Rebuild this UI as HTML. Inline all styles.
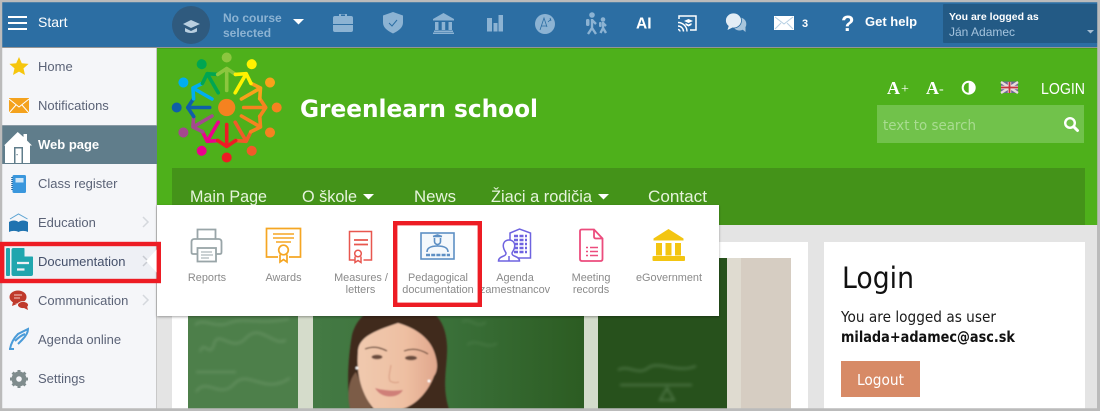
<!DOCTYPE html>
<html><head><meta charset="utf-8"><style>
html,body{margin:0;padding:0;background:#bbb;width:1100px;height:411px;overflow:hidden}
svg{display:block}
text{font-family:"Liberation Sans",sans-serif}
.d{font-family:"DejaVu Sans",sans-serif}
.m{font-size:13px;fill:#5b6377}
.t{font-size:10.9px;fill:#8a8a8a;text-anchor:middle}
.tb{fill:#8cb3d3}
.nav{font-size:16.5px;fill:#e6f4dc}
</style></head><body>
<svg width="1100" height="411" viewBox="0 0 1100 411" xmlns="http://www.w3.org/2000/svg">
<defs>
<filter id="b1"><feGaussianBlur stdDeviation=".8"/></filter>
<filter id="b2"><feGaussianBlur stdDeviation="1.600"/></filter>
<filter id="sh" x="-5%" y="-10%" width="110%" height="125%"><feDropShadow dx="0" dy="1" stdDeviation="1.2" flood-color="#000" flood-opacity=".35"/></filter>
<linearGradient id="bd" x1="0" x2="1" y1="0" y2="0"><stop offset="0" stop-color="#447a44"/><stop offset=".5" stop-color="#3a7039"/><stop offset="1" stop-color="#2c5c22"/></linearGradient>
<linearGradient id="skin" x1="0" x2="1" y1="0" y2="0"><stop offset="0" stop-color="#f0c9ae"/><stop offset=".6" stop-color="#eebfa2"/><stop offset="1" stop-color="#e0a68c"/></linearGradient>
<g id="fig"><path d="M0-17V-39M-9-33L0-39L9-33" fill="none" stroke-width="3.600" stroke-linecap="round" stroke-linejoin="round"/><circle cy="-50" r="5" stroke="none"/></g>
</defs>
<rect width="1100" height="411" fill="#bbb"/>
<!-- background -->
<rect x="157" y="48" width="940" height="361" fill="#e4e4e4"/>
<rect x="157" y="48" width="941" height="177" fill="#4eb01b"/>
<rect x="172" y="168" width="913" height="57" fill="#449319"/>
<rect x="172" y="242" width="636" height="167" fill="#fff"/>
<rect x="824" y="242" width="261" height="167" fill="#fff"/>
<!-- photo -->
<svg x="188" y="258" width="603" height="151" viewBox="188 258 603 151">
<rect x="188" y="258" width="603" height="151" fill="#d6cdc2"/>
<rect x="188" y="258" width="110" height="151" fill="#4d7f4a"/>
<rect x="313" y="258" width="271" height="151" fill="url(#bd)"/>
<rect x="598" y="258" width="129" height="151" fill="#27511c"/>
<rect x="298" y="258" width="15" height="151" fill="#d5dccb"/>
<rect x="584" y="258" width="14" height="151" fill="#d3dccb"/>
<rect x="727" y="258" width="14" height="151" fill="#dfdbd0"/>
<g filter="url(#b2)" stroke="#8aae84" stroke-width="2" fill="none" opacity=".4">
<path d="M195 325c8-8 20 4 34-2s30 2 60-4M200 352c4-14 10 8 14-8s18 10 32-6 28 10 40 2M196 392c10-16 24 8 38-8s30 12 56-6M196 372h40"/>
<path d="M462 322c8-6 14 8 24 0M467 345c10-8 20 6 30-2" opacity=".5"/>
<path d="M618 370c10-6 20 6 30-2s30 6 48-2M620 385h72M660 400l7-12 7 12z"/>
</g>
<g filter="url(#b1)">
<path d="M350 409C346 380 349 352 352 335C356 320 366 310 380 308H420C438 310 446 326 447 345C448 365 441 385 449 409Z" fill="#40291c"/>
<path d="M350 409C346 392 350 378 356 372L372 409Z" fill="#7c5c46"/>
<path d="M358 352C358 336 378 330 398 323C415 328 432 338 436 358C438 366 437 372 434 376C428 392 416 405 402 409H374C362 395 356 375 358 352Z" fill="url(#skin)"/>
<path d="M365 349c8-3 14-2 22 2M404 351c8-3 16-2 24 3" stroke="#5a3a2c" stroke-width="1.200" fill="none"/>
<ellipse cx="377" cy="357" rx="5.500" ry="2.300" fill="#6a4c3c"/><ellipse cx="411" cy="358" rx="6" ry="2.300" fill="#6a4c3c"/>
<path d="M375 388c10 3 20 3 28 2-5 9-22 9-28-2z" fill="#cf7f78"/>
<path d="M391 365c-1 7-3 12-1 16 3 2 6 2 9 1" stroke="#dba288" stroke-width="1.200" fill="none"/>
<circle cx="357" cy="368" r="1.400" fill="#fff"/><circle cx="429" cy="381" r="1.400" fill="#fff"/>
</g>
</svg>
<!-- logo -->
<g transform="translate(226.700 107.500)">
<use href="#fig" transform="rotate(210)" fill="#ec008c" stroke="#ec008c"/>
<use href="#fig" transform="rotate(240)" fill="#a4488f" stroke="#a4488f"/>
<use href="#fig" transform="rotate(270)" fill="#0f5fa8" stroke="#0f5fa8"/>
<use href="#fig" transform="rotate(300)" fill="#00aeef" stroke="#00aeef"/>
<use href="#fig" transform="rotate(330)" fill="#00a651" stroke="#00a651"/>
<use href="#fig" fill="#8cc63f" stroke="#8cc63f"/>
<use href="#fig" transform="rotate(150)" fill="#f15a29" stroke="#f15a29"/>
<use href="#fig" transform="rotate(120)" fill="#f58220" stroke="#f58220"/>
<use href="#fig" transform="rotate(90)" fill="#f58220" stroke="#f58220"/>
<use href="#fig" transform="rotate(60)" fill="#f9a11b" stroke="#f9a11b"/>
<use href="#fig" transform="rotate(30)" fill="#fff200" stroke="#fff200"/>
<use href="#fig" transform="rotate(180)" fill="#ed1c24" stroke="#ed1c24"/>
<circle r="8.600" fill="#f58220"/>
</g>
<text class="d" x="300" y="117" font-size="24" font-weight="bold" fill="#fff" textLength="238" lengthAdjust="spacingAndGlyphs">Greenlearn school</text>
<!-- nav -->
<text class="nav" x="190" y="202" textLength="77" lengthAdjust="spacingAndGlyphs">Main Page</text>
<text class="nav" x="302" y="202" textLength="55" lengthAdjust="spacingAndGlyphs">O škole</text>
<path d="M363 194h11l-5.500 5.500z" fill="#fff"/>
<text class="nav" x="414" y="202" textLength="42" lengthAdjust="spacingAndGlyphs">News</text>
<text class="nav" x="491" y="202" textLength="101" lengthAdjust="spacingAndGlyphs">Žiaci a rodičia</text>
<path d="M598 194h11l-5.500 5.500z" fill="#fff"/>
<text class="nav" x="648" y="202" textLength="59" lengthAdjust="spacingAndGlyphs">Contact</text>
<!-- right header -->
<text x="887" y="94" style="font-family:'Liberation Serif',serif" font-size="18" font-weight="bold" fill="#fff">A<tspan font-size="14" font-weight="normal" dx="1" dy="-1">+</tspan></text>
<text x="926" y="94" style="font-family:'Liberation Serif',serif" font-size="18" font-weight="bold" fill="#fff">A<tspan font-size="14" font-weight="normal" dy="-1">-</tspan></text>
<circle cx="968.700" cy="87.700" r="6" fill="#4eb01b" stroke="#fff" stroke-width="2"/><path d="M968.700 81.700a6 6 0 0 1 0 12z" fill="#fff"/>
<g><rect x="1001" y="81.500" width="17" height="11.500" fill="#6d6a94"/><path d="M1001 82l17 11M1018 82l-17 11" stroke="#e9dcdc" stroke-width="2.400"/><path d="M1009.500 82v11M1001 87.500h17" stroke="#e9dcdc" stroke-width="3.400"/><path d="M1009.500 82v11M1001 87.500h17" stroke="#c6343f" stroke-width="1.800"/></g>
<text x="1041" y="94" font-size="15.500" fill="#fff" textLength="44" lengthAdjust="spacingAndGlyphs">LOGIN</text>
<rect x="877" y="105" width="207" height="38" fill="#71c24b"/>
<text class="d" x="883" y="130" font-size="14" fill="#a9dc91" textLength="93" lengthAdjust="spacingAndGlyphs">text to search</text>
<circle cx="1070" cy="123" r="4.800" fill="none" stroke="#fff" stroke-width="2.400"/><path d="M1073.800 126.800l3.700 3.700" stroke="#fff" stroke-width="3" stroke-linecap="round"/>
<!-- login -->
<text class="d" x="842" y="288" font-size="29" fill="#111" textLength="72" lengthAdjust="spacingAndGlyphs">Login</text>
<text class="d" x="841" y="322" font-size="15" fill="#1a1a1a" textLength="155" lengthAdjust="spacingAndGlyphs">You are logged as user</text>
<text class="d" x="841" y="342" font-size="15" font-weight="bold" fill="#111" textLength="174" lengthAdjust="spacingAndGlyphs">milada+adamec@asc.sk</text>
<rect x="841" y="361" width="79" height="36" fill="#d78a66"/>
<text class="d" x="857" y="385" font-size="15" fill="#fff" textLength="47" lengthAdjust="spacingAndGlyphs">Logout</text>
<!-- top bar -->
<rect x="2" y="2" width="1096" height="45" fill="#2c6ea3"/>
<rect x="2" y="47" width="1096" height="1.500" fill="#000" opacity=".2"/>
<path d="M8 17h19M8 23h19M8 29h19" stroke="#fff" stroke-width="2"/>
<text x="38" y="27" font-size="14" fill="#fff">Start</text>
<circle cx="191" cy="25" r="19" fill="#2f5a7e"/>
<path d="M183 24l8-4 9 4-9 4z" fill="#b9cfe0"/><path d="M185 28v3.500c3 2 9 2 12 0V28l-6 3z" fill="#b9cfe0"/>
<text x="223" y="22" font-size="12" font-weight="bold" class="tb">No course</text>
<text x="223" y="37" font-size="12" font-weight="bold" class="tb">selected</text>
<path d="M293 19h11l-5.500 5.500z" fill="#fff"/>
<g fill="#8cb3d3">
<path d="M333 18q0-2 2-2h4v-2h8v2h4q2 0 2 2v6h-20zM341 14.500v1.500h4v-1.500zM333 25h20v5q0 2-2 2h-16q-2 0-2-2z" fill-rule="evenodd"/>
<path d="M393 12l10 3.500v7c0 5-4 8-10 11-6-3-10-6-10-11v-7z"/>
<path d="M443.500 13l10.500 6v1.500h-21v-1.500zM435 22h3.500v8h-3.500zM441.700 22h3.500v8h-3.500zM448.500 22h3.500v8h-3.500zM434 30.500h19v1.500h-19zM433 32.500h21v1.500h-21z"/>
<path d="M487 18h5v13.500h-5zM493.500 23h4v8.500h-4zM498.500 15h4.500v16.500h-4.500z"/>
<circle cx="545" cy="24" r="10"/>
<circle cx="592" cy="15" r="2.800"/><circle cx="603" cy="19.500" r="2.300"/>
<rect x="586" y="19" width="3.500" height="7" rx="1.500"/><rect x="599" y="22" width="2.500" height="5" rx="1"/>
</g>
<path d="M389 23l3 3 5-6" stroke="#2c6ea3" fill="none" stroke-width="1"/>
<path d="M540 30l4-12 3 9M541.500 26h5M548 22l3-3M550 18l1 3" stroke="#2c6ea3" fill="none" stroke-width=".8"/>
<path d="M592 19v9l-4 6M592 28l4 6M592 20l4 4M603 22v6l-2.500 5M603 28l3 5M603 23l3 3" stroke="#8cb3d3" stroke-width="2.400" fill="none"/>
<text x="636" y="28.500" font-size="15.500" font-weight="bold" fill="#fff">AI</text>
<g fill="none" stroke="#fff"><path d="M679 19v-3h17v14h-6" stroke-width="1.500"/><path d="M678 29.500a2 2 0 0 1 2 2M678 26a5.500 5.500 0 0 1 5.500 5.500M678 22.500a9 9 0 0 1 9 9" stroke-width="1.400"/></g>
<path d="M688.500 19l4.500 2-4.500 2-4.500-2zM685.500 23l3 1.500 3-1.500v2l-3 1.500-3-1.500z" fill="#fff"/>
<ellipse cx="739.500" cy="24" rx="6.800" ry="6.500" fill="#a7c5dc"/><path d="M742 29l3.500 3v-5z" fill="#a7c5dc"/>
<ellipse cx="733.500" cy="20.500" rx="8" ry="7.500" fill="#e3edf5" stroke="#2c6ea3" stroke-width=".8"/><path d="M729 25l-1.500 5 6-3z" fill="#e3edf5"/>
<rect x="774" y="16" width="20" height="14" fill="#fff"/><path d="M775 17l9 7 9-7M775 29l6-6M793 29l-6-6" stroke="#b5cfe3" fill="none"/>
<text x="802" y="27" font-size="11" font-weight="bold" fill="#fff">3</text>
<text x="841" y="31" font-size="22" font-weight="bold" fill="#fff">?</text>
<text x="865" y="26" font-size="13" font-weight="bold" fill="#fff">Get help</text>
<rect x="943" y="4" width="155" height="39" rx="1" fill="#235a85"/>
<text x="949" y="20" font-size="10.500" font-weight="bold" fill="#fff">You are logged as</text>
<text x="949" y="36" font-size="12" fill="#a5c4de">Ján Adamec</text>
<path d="M1087 30h7l-3.500 3.500z" fill="#a5bdd2"/>
<!-- sidebar -->
<rect x="2" y="48" width="155" height="361" fill="#f5f6f9"/>
<rect x="156" y="48" width="1" height="361" fill="#c8c8c8"/>
<rect x="2" y="125" width="155" height="39" fill="#607d8b"/>
<rect x="2" y="125" width="155" height="1" fill="#8a9aa5"/>
<rect x="2" y="246" width="154" height="37" fill="#eef0f5"/>
<path d="M19 57l2.800 6.200 6.800.7-5.100 4.500 1.500 6.600-6-3.400-6 3.400 1.500-6.600-5.100-4.500 6.800-.7z" fill="#f6c60d"/>
<rect x="9" y="98" width="20" height="15" fill="#f4a21d"/><path d="M9 99l10 8 10-8M9 113l7-8M29 113l-7-8" stroke="#fff" fill="none"/>
<text class="m" x="38" y="71">Home</text>
<text class="m" x="38" y="110">Notifications</text>
<path d="M4 145.500L17.700 132l5.800 5V134h3.500v6.500L32 145.500h-2V163H5V145.500z" fill="#fff"/><rect x="14" y="147" width="9" height="16" fill="#607d8b"/><rect x="15.500" y="148.500" width="6" height="14.500" fill="#fff"/><rect x="16.500" y="154" width="1.200" height="1.200" fill="#607d8b"/>
<text x="38" y="149" font-size="13" font-weight="bold" fill="#fff">Web page</text>
<rect x="12.500" y="175" width="13.500" height="18" rx="1.500" fill="#3a97dd"/><rect x="15.500" y="178" width="8" height="4.500" fill="#cfe6f7"/><path d="M12 177v14" stroke="#1d5f95" stroke-dasharray="1 1" stroke-width="1.500"/>
<text class="m" x="38" y="188">Class register</text>
<path d="M9 222c3-2 7-2 9.500 0 2.500-2 6.500-2 9.500 0v10c-3-1.500-7-1.500-9.500 0-2.500-1.500-6.500-1.500-9.500 0z" fill="#1f73b0"/><path d="M10 219l8.500-5 9 5" stroke="#5ba3d3" fill="none"/>
<text class="m" x="38" y="227">Education</text>
<path d="M143 217l5 5-5 5" stroke="#d5d8dd" stroke-width="1.500" fill="none"/>
<rect x="6" y="248" width="4" height="28" rx="1" fill="#20a6ae"/>
<path d="M13.500 248H24l9 9v17q0 2-2 2H13.500q-2 0-2-2V250q0-2 2-2z" fill="#20a6ae"/>
<path d="M24.500 248l8.500 8.500h-8.500z" fill="#eef0f5"/><path d="M17 263h12M17 269.500h7.500" stroke="#eef0f5" stroke-width="2.200"/>
<text x="38" y="266" font-size="13" fill="#45506a">Documentation</text>
<path d="M143 256l5 5-5 5" stroke="#c9ccd2" stroke-width="1.500" fill="none"/>
<ellipse cx="18" cy="297" rx="8.500" ry="6.500" fill="#c0392b"/><path d="M13 302l-1 4 5-2z" fill="#c0392b"/>
<ellipse cx="23" cy="305" rx="5.500" ry="3.500" fill="#c0392b" stroke="#f5f6f9" stroke-width=".8"/><path d="M24 308l4 2-1-4z" fill="#c0392b"/>
<path d="M14 295h8M14 298h6" stroke="#f3c9c3"/>
<text class="m" x="38" y="305">Communication</text>
<path d="M143 295l5 5-5 5" stroke="#d5d8dd" stroke-width="1.500" fill="none"/>
<path d="M10 349c1-6 4-11 8-15l10-5c0 4-3 8-6 11l-4 4M15 341c3-3 7-6 10-7M9 349h5" stroke="#4a9bd8" stroke-width="2" fill="none"/>
<text class="m" x="38" y="344">Agenda online</text>
<circle cx="19" cy="379" r="5.500" fill="none" stroke="#7f8c8d" stroke-width="4"/>
<path d="M19 370v18M10 379h18M12.600 372.600l12.800 12.800M25.400 372.600l-12.800 12.800" stroke="#7f8c8d" stroke-width="3"/>
<circle cx="19" cy="379" r="2.800" fill="#f5f6f9"/>
<text class="m" x="38" y="383">Settings</text>
<!-- popup -->
<rect x="157" y="205" width="562" height="111" fill="#fff" filter="url(#sh)"/>
<path d="M157 249l-11 12 11 12z" fill="#fff"/>
<!-- popup icons -->
<g fill="none" stroke="#99a5a8" stroke-width="1.800">
<path d="M197.500 239v-9.500h18V239"/><path d="M197 254h-4q-1.500 0-1.500-2v-10q0-3 3-3h24q3 0 3 3v10q0 2-1.500 2h-4"/><rect x="197.500" y="248" width="18.500" height="13.500"/>
<path d="M201 252h11M201 255h12M201 258h8" stroke-width="1"/>
</g>
<g fill="none" stroke="#f5a623" stroke-width="1.700">
<path d="M278 257h-11.500v-28.500h34V257H289"/><path d="M273 234h21M273 238h21M276 242h15" stroke-width="1.500"/>
<circle cx="283.500" cy="250" r="4.800"/><path d="M280 254.500v7.500l3.500-2.500 3.500 2.500v-7.500"/>
</g>
<g fill="none" stroke="#e8574f" stroke-width="1.500">
<path d="M354.500 260H349.500v-28.500h22V260h-8"/><path d="M354 240h14M354 244.500h14" stroke-width="1.700"/>
<circle cx="358" cy="253.500" r="3.300"/><path d="M355 256.500v6l3-2 3 2v-6"/>
</g>
<g fill="none" stroke="#5d8fc4" stroke-width="1.600">
<rect x="421" y="233" width="33" height="26" fill="#f4f8fc"/>
<path d="M433 236.500h9M433 236.500l4.500-1.500 4.500 1.500M434.500 238v3.500a3 3 0 0 0 6 0V238M427 252c0-4 4-6 10.500-6s10.500 2 10.500 6"/>
<path d="M426 255h24" stroke-width="2.500" stroke-dasharray="4 1.200"/>
</g>
<g fill="none" stroke="#6e63e0" stroke-width="1.500">
<path d="M510 240v-7l9.500-4 11 4v25h-16"/><path d="M514 236h13M514 240h13M514 244h13M514 248h13M514 252h13" stroke-width="2.400" stroke-dasharray="4 1.500"/>
<path d="M509 240c-4 0-6.500 3-5.500 7.500.5 3 2 4 2.500 5.500 0 2-1 2.500-3.500 3.500s-4 2.500-4 4.500h21c0-2-1.500-3.500-4-4.500s-3.500-1.500-3.500-3.500c.5-1.500 2-2.500 2.500-5.500 1-4.500-1.500-7.500-5.500-7.500z" fill="#fff"/>
<path d="M509 256v5"/>
</g>
<g fill="none" stroke="#ec4c7d" stroke-width="1.800">
<path d="M582 229.500h12l8.500 9v20.500q0 2-2 2h-18.500q-2 0-2-2v-28q0-1.500 2-1.500z"/><path d="M594 229.500v7q0 2 2 2h6.500"/>
<path d="M586 247.500h2M590 247.500h8M586 251.500h2M590 251.500h8M586 255.500h2M590 255.500h8" stroke-width="1.500"/>
</g>
<path d="M668.500 229l15 9.500v2h-30v-2zM656 243h6v12.500h-6zM665.500 243h6v12.500h-6zM675 243h6v12.500h-6z" fill="#f3c511"/><rect x="652.500" y="256" width="32.500" height="5" rx="1" fill="#f3c511"/>
<!-- popup labels -->
<text class="t" x="207" y="281">Reports</text>
<text class="t" x="283.500" y="281">Awards</text>
<text class="t" x="361" y="281">Measures /</text><text class="t" x="360.500" y="293">letters</text>
<text class="t" x="438" y="281">Pedagogical</text><text class="t" x="438" y="293">documentation</text>
<text class="t" x="515" y="281">Agenda</text><text class="t" x="515" y="293">zamestnancov</text>
<text class="t" x="591" y="281">Meeting</text><text class="t" x="591" y="293">records</text>
<text class="t" x="669" y="281">eGovernment</text>
<!-- frame -->
<path d="M1 1H1098.500V409.500H1V1" fill="none" stroke="#bbb" stroke-width="2.500"/>
<!-- red boxes -->
<rect x="2.200" y="244" width="156.600" height="37" fill="none" stroke="#ed1c24" stroke-width="4.400"/>
<rect x="395.200" y="223.200" width="84.600" height="81.600" fill="none" stroke="#ed1c24" stroke-width="4.400"/>
</svg>
</body></html>
